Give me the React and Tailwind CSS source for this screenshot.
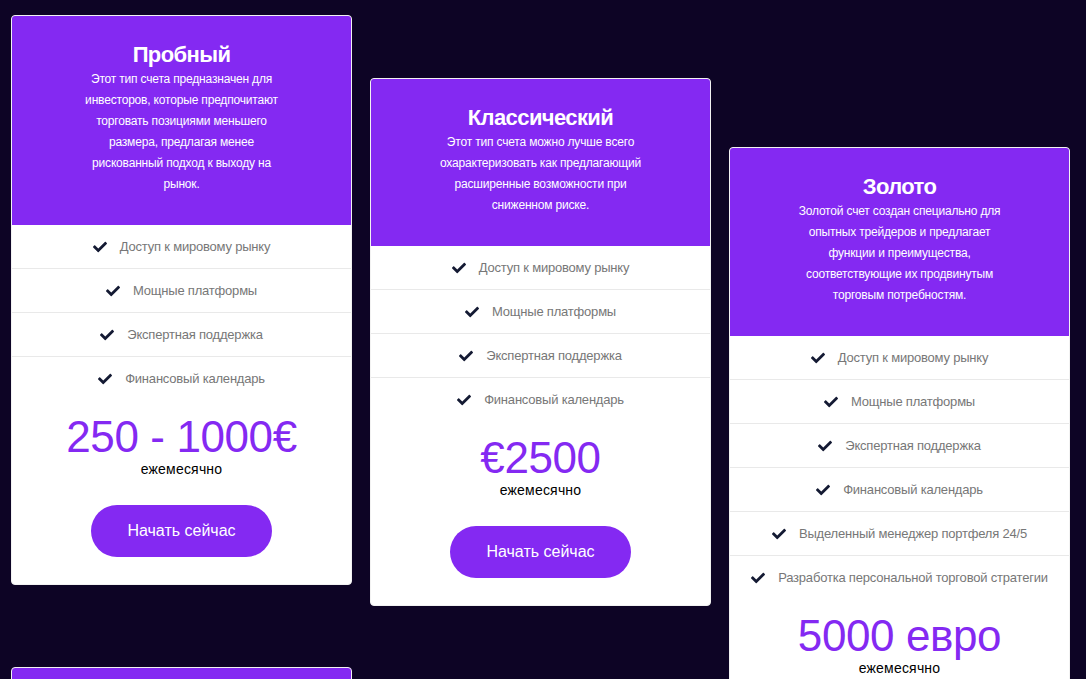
import React from "react";
import { FaCheck } from "react-icons/fa";

const plans = [
  {
    title: "Пробный",
    desc: "Этот тип счета предназначен для инвесторов, которые предпочитают торговать позициями меньшего размера, предлагая менее рискованный подход к выходу на рынок.",
    features: ["Доступ к мировому рынку", "Мощные платформы", "Экспертная поддержка", "Финансовый календарь"],
    price: "250 - 1000€",
  },
  {
    title: "Классический",
    desc: "Этот тип счета можно лучше всего охарактеризовать как предлагающий расширенные возможности при сниженном риске.",
    features: ["Доступ к мировому рынку", "Мощные платформы", "Экспертная поддержка", "Финансовый календарь"],
    price: "€2500",
  },
  {
    title: "Золото",
    desc: "Золотой счет создан специально для опытных трейдеров и предлагает функции и преимущества, соответствующие их продвинутым торговым потребностям.",
    features: [
      "Доступ к мировому рынку",
      "Мощные платформы",
      "Экспертная поддержка",
      "Финансовый календарь",
      "Выделенный менеджер портфеля 24/5",
      "Разработка персональной торговой стратегии",
    ],
    price: "5000 евро",
  },
];

function Card({ plan }) {
  return (
    <div className="w-[341px] rounded-[4px] border border-[#f2f2f2] bg-white overflow-hidden">
      <div className="bg-[#8429f2] pt-[25px] pb-[30px] text-center text-white">
        <h3 className="text-[22px] leading-[28px] font-bold tracking-[-0.6px]">{plan.title}</h3>
        <p className="mx-auto w-[208px] text-[12px] leading-[21px] tracking-[-0.18px]">{plan.desc}</p>
      </div>
      <ul>
        {plan.features.map((f, i) => (
          <li
            key={i}
            className="h-[44px] flex items-center justify-center gap-[13px] border-b border-[#e9e9e9] last:border-b-0 text-[13px] tracking-[-0.2px] text-[#777777]"
          >
            <FaCheck className="w-[14px] h-[14px] text-[#141a33]" />
            <span>{f}</span>
          </li>
        ))}
      </ul>
      <div className="pt-[14px] pb-[27px] flex flex-col items-center">
        <div className="text-[44px] leading-[44px] tracking-[-0.4px] text-[#8429f2]">{plan.price}</div>
        <div className="text-[14px] leading-[20px] tracking-[0.2px] text-black">ежемесячно</div>
        <button className="mt-[26px] h-[52px] w-[181px] rounded-full bg-[#8429f2] text-white text-[16px]">
          Начать сейчас
        </button>
      </div>
    </div>
  );
}

export default function App() {
  return (
    <div
      className="w-[1086px] h-[679px] overflow-hidden bg-[#0d0425] px-[11px]"
      style={{ fontFamily: '"Liberation Sans", Arial, sans-serif' }}
    >
      <div className="flex items-start gap-[18px]">
        <div className="flex flex-col gap-[82px] pt-[15px]">
          <Card plan={plans[0]} />
          <div className="w-[341px] h-[60px] rounded-[4px] border border-[#f2f2f2] bg-[#8429f2]" />
        </div>
        <div className="pt-[78px]">
          <Card plan={plans[1]} />
        </div>
        <div className="pt-[147px]">
          <Card plan={plans[2]} />
        </div>
      </div>
    </div>
  );
}
